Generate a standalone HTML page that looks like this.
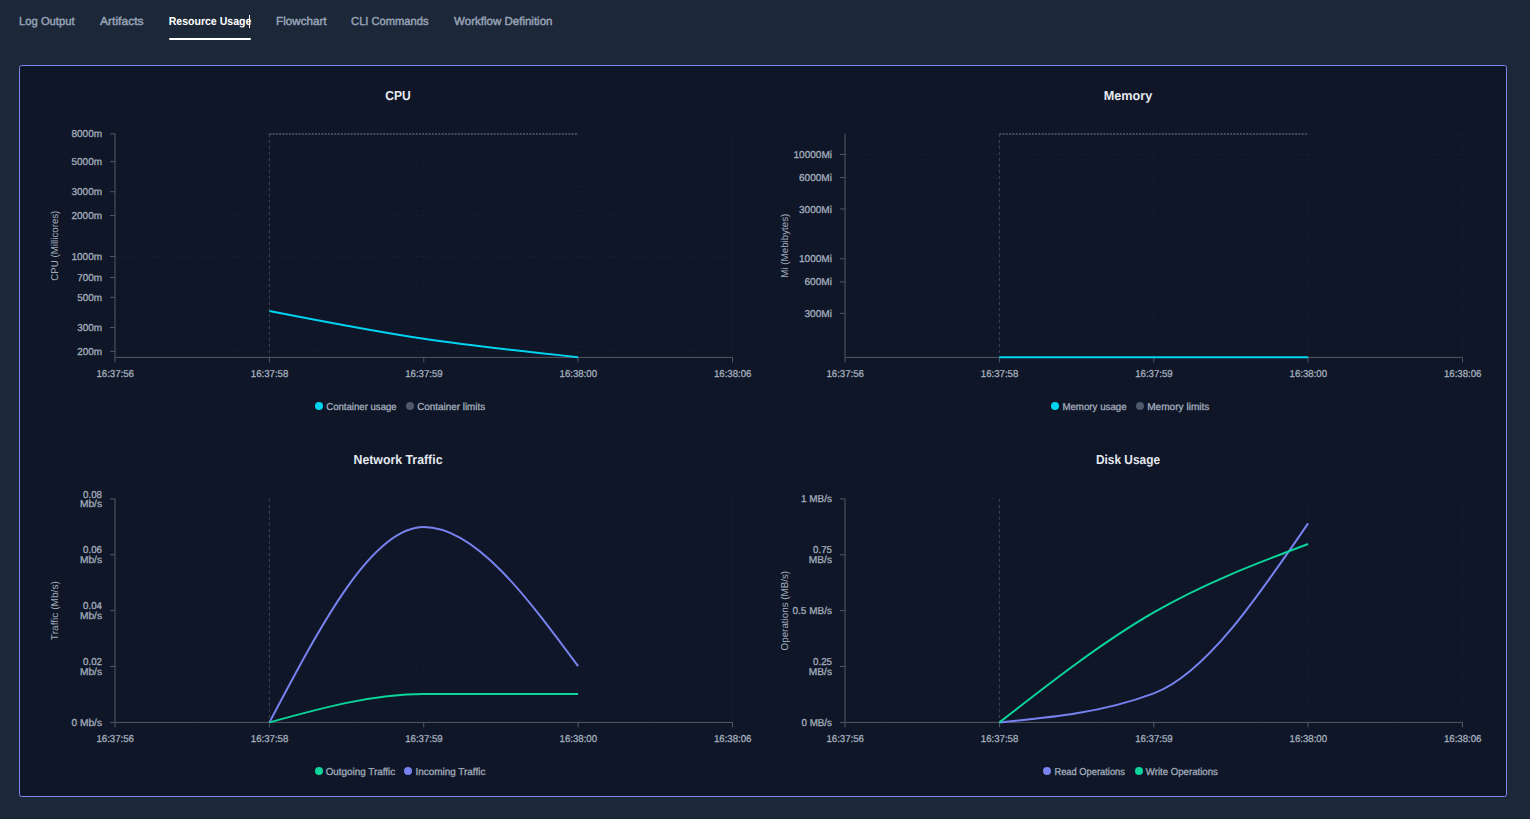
<!DOCTYPE html>
<html><head><meta charset="utf-8"><title>Resource Usage</title>
<style>
html,body{margin:0;padding:0;background:#1c2738;width:1530px;height:819px;overflow:hidden}
svg{display:block;font-family:"Liberation Sans", sans-serif}
</style></head><body>
<svg width="1530" height="819" viewBox="0 0 1530 819" text-rendering="geometricPrecision">
<rect width="1530" height="819" fill="#1c2738"/>
<text x="19.1" y="24.9" font-size="11.5" font-weight="400" fill="#97a3b6" text-anchor="start" textLength="55.4" lengthAdjust="spacingAndGlyphs" stroke="#97a3b6" stroke-width="0.45">Log Output</text>
<text x="100.1" y="24.9" font-size="11.5" font-weight="400" fill="#97a3b6" text-anchor="start" textLength="43.4" lengthAdjust="spacingAndGlyphs" stroke="#97a3b6" stroke-width="0.45">Artifacts</text>
<text x="168.7" y="24.9" font-size="11.5" font-weight="700" fill="#ffffff" text-anchor="start" textLength="82.6" lengthAdjust="spacingAndGlyphs">Resource Usage</text>
<text x="276.1" y="24.9" font-size="11.5" font-weight="400" fill="#97a3b6" text-anchor="start" textLength="50.4" lengthAdjust="spacingAndGlyphs" stroke="#97a3b6" stroke-width="0.45">Flowchart</text>
<text x="351.1" y="24.9" font-size="11.5" font-weight="400" fill="#97a3b6" text-anchor="start" textLength="77.4" lengthAdjust="spacingAndGlyphs" stroke="#97a3b6" stroke-width="0.45">CLI Commands</text>
<text x="454.1" y="24.9" font-size="11.5" font-weight="400" fill="#97a3b6" text-anchor="start" textLength="98.4" lengthAdjust="spacingAndGlyphs" stroke="#97a3b6" stroke-width="0.45">Workflow Definition</text>
<rect x="169" y="38" width="82" height="2" rx="1" fill="#fff"/>
<rect x="249" y="15" width="1" height="13" fill="#fff"/>
<rect x="19.5" y="65.5" width="1487" height="731" rx="2" fill="#0e1628" stroke="#7d87f0" stroke-width="1"/>
<text x="398" y="100" font-size="13" font-weight="700" fill="#e5e9f0" text-anchor="middle" textLength="25.5" lengthAdjust="spacingAndGlyphs">CPU</text>
<line x1="115" y1="133.9" x2="732.5" y2="133.9" stroke="#161f2f" stroke-dasharray="2.5 2.2"/>
<line x1="115" y1="161.61" x2="732.5" y2="161.61" stroke="#161f2f" stroke-dasharray="2.5 2.2"/>
<line x1="115" y1="191.72" x2="732.5" y2="191.72" stroke="#161f2f" stroke-dasharray="2.5 2.2"/>
<line x1="115" y1="215.62" x2="732.5" y2="215.62" stroke="#161f2f" stroke-dasharray="2.5 2.2"/>
<line x1="115" y1="256.48" x2="732.5" y2="256.48" stroke="#161f2f" stroke-dasharray="2.5 2.2"/>
<line x1="115" y1="286.59" x2="732.5" y2="286.59" stroke="#161f2f" stroke-dasharray="2.5 2.2"/>
<line x1="115" y1="310.49" x2="732.5" y2="310.49" stroke="#161f2f" stroke-dasharray="2.5 2.2"/>
<line x1="115" y1="351.35" x2="732.5" y2="351.35" stroke="#161f2f" stroke-dasharray="2.5 2.2"/>
<line x1="115" y1="133.9" x2="115" y2="357.4" stroke="#161f2f" stroke-dasharray="2.5 2.2"/>
<line x1="269.38" y1="133.9" x2="269.38" y2="357.4" stroke="#161f2f" stroke-dasharray="2.5 2.2"/>
<line x1="423.75" y1="133.9" x2="423.75" y2="357.4" stroke="#161f2f" stroke-dasharray="2.5 2.2"/>
<line x1="578.12" y1="133.9" x2="578.12" y2="357.4" stroke="#161f2f" stroke-dasharray="2.5 2.2"/>
<line x1="732.5" y1="133.9" x2="732.5" y2="357.4" stroke="#161f2f" stroke-dasharray="2.5 2.2"/>
<line x1="269.38" y1="133.9" x2="269.38" y2="357.4" stroke="#3b4658" stroke-dasharray="3 3"/>
<line x1="115" y1="133.9" x2="115" y2="357.4" stroke="#55585f"/>
<line x1="115" y1="357.4" x2="732.5" y2="357.4" stroke="#55585f"/>
<line x1="115" y1="357.4" x2="115" y2="362.4" stroke="#55585f"/>
<line x1="269.38" y1="357.4" x2="269.38" y2="362.4" stroke="#55585f"/>
<line x1="423.75" y1="357.4" x2="423.75" y2="362.4" stroke="#55585f"/>
<line x1="578.12" y1="357.4" x2="578.12" y2="362.4" stroke="#55585f"/>
<line x1="732.5" y1="357.4" x2="732.5" y2="362.4" stroke="#55585f"/>
<line x1="110" y1="133.9" x2="115" y2="133.9" stroke="#55585f"/>
<text x="102" y="137" font-size="10" font-weight="400" fill="#a3adbb" text-anchor="end" textLength="30.5" lengthAdjust="spacingAndGlyphs" stroke="#a3adbb" stroke-width="0.3">8000m</text>
<line x1="110" y1="161.61" x2="115" y2="161.61" stroke="#55585f"/>
<text x="102" y="165" font-size="10" font-weight="400" fill="#a3adbb" text-anchor="end" textLength="30.5" lengthAdjust="spacingAndGlyphs" stroke="#a3adbb" stroke-width="0.3">5000m</text>
<line x1="110" y1="191.72" x2="115" y2="191.72" stroke="#55585f"/>
<text x="102" y="195" font-size="10" font-weight="400" fill="#a3adbb" text-anchor="end" textLength="30.5" lengthAdjust="spacingAndGlyphs" stroke="#a3adbb" stroke-width="0.3">3000m</text>
<line x1="110" y1="215.62" x2="115" y2="215.62" stroke="#55585f"/>
<text x="102" y="219" font-size="10" font-weight="400" fill="#a3adbb" text-anchor="end" textLength="30.5" lengthAdjust="spacingAndGlyphs" stroke="#a3adbb" stroke-width="0.3">2000m</text>
<line x1="110" y1="256.48" x2="115" y2="256.48" stroke="#55585f"/>
<text x="102" y="260" font-size="10" font-weight="400" fill="#a3adbb" text-anchor="end" textLength="30.5" lengthAdjust="spacingAndGlyphs" stroke="#a3adbb" stroke-width="0.3">1000m</text>
<line x1="110" y1="277.5" x2="115" y2="277.5" stroke="#55585f"/>
<text x="102" y="281" font-size="10" font-weight="400" fill="#a3adbb" text-anchor="end" textLength="24.8" lengthAdjust="spacingAndGlyphs" stroke="#a3adbb" stroke-width="0.3">700m</text>
<line x1="110" y1="297.34" x2="115" y2="297.34" stroke="#55585f"/>
<text x="102" y="301" font-size="10" font-weight="400" fill="#a3adbb" text-anchor="end" textLength="24.8" lengthAdjust="spacingAndGlyphs" stroke="#a3adbb" stroke-width="0.3">500m</text>
<line x1="110" y1="327.45" x2="115" y2="327.45" stroke="#55585f"/>
<text x="102" y="331" font-size="10" font-weight="400" fill="#a3adbb" text-anchor="end" textLength="24.8" lengthAdjust="spacingAndGlyphs" stroke="#a3adbb" stroke-width="0.3">300m</text>
<line x1="110" y1="351.35" x2="115" y2="351.35" stroke="#55585f"/>
<text x="102" y="355" font-size="10" font-weight="400" fill="#a3adbb" text-anchor="end" textLength="24.8" lengthAdjust="spacingAndGlyphs" stroke="#a3adbb" stroke-width="0.3">200m</text>
<text x="115.2" y="377" font-size="10" font-weight="400" fill="#a3adbb" text-anchor="middle" textLength="37.6" lengthAdjust="spacingAndGlyphs" stroke="#a3adbb" stroke-width="0.3">16:37:56</text>
<text x="269.57" y="377" font-size="10" font-weight="400" fill="#a3adbb" text-anchor="middle" textLength="37.6" lengthAdjust="spacingAndGlyphs" stroke="#a3adbb" stroke-width="0.3">16:37:58</text>
<text x="423.95" y="377" font-size="10" font-weight="400" fill="#a3adbb" text-anchor="middle" textLength="37.6" lengthAdjust="spacingAndGlyphs" stroke="#a3adbb" stroke-width="0.3">16:37:59</text>
<text x="578.33" y="377" font-size="10" font-weight="400" fill="#a3adbb" text-anchor="middle" textLength="37.6" lengthAdjust="spacingAndGlyphs" stroke="#a3adbb" stroke-width="0.3">16:38:00</text>
<text x="732.7" y="377" font-size="10" font-weight="400" fill="#a3adbb" text-anchor="middle" textLength="37.6" lengthAdjust="spacingAndGlyphs" stroke="#a3adbb" stroke-width="0.3">16:38:06</text>
<text x="0" y="0" font-size="10" fill="#a3adbb" text-anchor="middle" textLength="70" lengthAdjust="spacingAndGlyphs" transform="translate(57.6,245.65) rotate(-90)">CPU (Millicores)</text>
<path d="M269.38,134C320.83,134,372.29,134,423.75,134C475.21,134,526.67,134,578.12,134" fill="none" stroke="#404c5f" stroke-width="2" stroke-dasharray="2 1.25"/>
<path d="M269.38,311C320.83,321.05,372.29,331.1,423.75,338.8C475.21,346.5,526.67,351.85,578.12,357.2" fill="none" stroke="#00d3ef" stroke-width="2"/>
<circle cx="319" cy="406" r="4" fill="#00d3ef"/>
<text x="326.2" y="410" font-size="10" font-weight="400" fill="#a3adbb" text-anchor="start" textLength="70.5" lengthAdjust="spacingAndGlyphs" stroke="#a3adbb" stroke-width="0.3">Container usage</text>
<circle cx="410" cy="406" r="4" fill="#4e5a6a"/>
<text x="417.2" y="410" font-size="10" font-weight="400" fill="#a3adbb" text-anchor="start" textLength="68" lengthAdjust="spacingAndGlyphs" stroke="#a3adbb" stroke-width="0.3">Container limits</text>
<text x="1128" y="100" font-size="13" font-weight="700" fill="#e5e9f0" text-anchor="middle" textLength="48.5" lengthAdjust="spacingAndGlyphs">Memory</text>
<line x1="845" y1="134" x2="1462.5" y2="134" stroke="#161f2f" stroke-dasharray="2.5 2.2"/>
<line x1="845" y1="154.42" x2="1462.5" y2="154.42" stroke="#161f2f" stroke-dasharray="2.5 2.2"/>
<line x1="845" y1="177.57" x2="1462.5" y2="177.57" stroke="#161f2f" stroke-dasharray="2.5 2.2"/>
<line x1="845" y1="208.98" x2="1462.5" y2="208.98" stroke="#161f2f" stroke-dasharray="2.5 2.2"/>
<line x1="845" y1="258.77" x2="1462.5" y2="258.77" stroke="#161f2f" stroke-dasharray="2.5 2.2"/>
<line x1="845" y1="281.92" x2="1462.5" y2="281.92" stroke="#161f2f" stroke-dasharray="2.5 2.2"/>
<line x1="845" y1="313.33" x2="1462.5" y2="313.33" stroke="#161f2f" stroke-dasharray="2.5 2.2"/>
<line x1="845" y1="133.9" x2="845" y2="357.4" stroke="#161f2f" stroke-dasharray="2.5 2.2"/>
<line x1="999.38" y1="133.9" x2="999.38" y2="357.4" stroke="#161f2f" stroke-dasharray="2.5 2.2"/>
<line x1="1153.75" y1="133.9" x2="1153.75" y2="357.4" stroke="#161f2f" stroke-dasharray="2.5 2.2"/>
<line x1="1308.12" y1="133.9" x2="1308.12" y2="357.4" stroke="#161f2f" stroke-dasharray="2.5 2.2"/>
<line x1="1462.5" y1="133.9" x2="1462.5" y2="357.4" stroke="#161f2f" stroke-dasharray="2.5 2.2"/>
<line x1="999.38" y1="133.9" x2="999.38" y2="357.4" stroke="#3b4658" stroke-dasharray="3 3"/>
<line x1="845" y1="133.9" x2="845" y2="357.4" stroke="#55585f"/>
<line x1="845" y1="357.4" x2="1462.5" y2="357.4" stroke="#55585f"/>
<line x1="845" y1="357.4" x2="845" y2="362.4" stroke="#55585f"/>
<line x1="999.38" y1="357.4" x2="999.38" y2="362.4" stroke="#55585f"/>
<line x1="1153.75" y1="357.4" x2="1153.75" y2="362.4" stroke="#55585f"/>
<line x1="1308.12" y1="357.4" x2="1308.12" y2="362.4" stroke="#55585f"/>
<line x1="1462.5" y1="357.4" x2="1462.5" y2="362.4" stroke="#55585f"/>
<line x1="840" y1="154.42" x2="845" y2="154.42" stroke="#55585f"/>
<text x="832" y="158" font-size="10" font-weight="400" fill="#a3adbb" text-anchor="end" textLength="38.5" lengthAdjust="spacingAndGlyphs" stroke="#a3adbb" stroke-width="0.3">10000Mi</text>
<line x1="840" y1="177.57" x2="845" y2="177.57" stroke="#55585f"/>
<text x="832" y="181" font-size="10" font-weight="400" fill="#a3adbb" text-anchor="end" textLength="33" lengthAdjust="spacingAndGlyphs" stroke="#a3adbb" stroke-width="0.3">6000Mi</text>
<line x1="840" y1="208.98" x2="845" y2="208.98" stroke="#55585f"/>
<text x="832" y="213" font-size="10" font-weight="400" fill="#a3adbb" text-anchor="end" textLength="33" lengthAdjust="spacingAndGlyphs" stroke="#a3adbb" stroke-width="0.3">3000Mi</text>
<line x1="840" y1="258.77" x2="845" y2="258.77" stroke="#55585f"/>
<text x="832" y="262" font-size="10" font-weight="400" fill="#a3adbb" text-anchor="end" textLength="33" lengthAdjust="spacingAndGlyphs" stroke="#a3adbb" stroke-width="0.3">1000Mi</text>
<line x1="840" y1="281.92" x2="845" y2="281.92" stroke="#55585f"/>
<text x="832" y="285" font-size="10" font-weight="400" fill="#a3adbb" text-anchor="end" textLength="27.5" lengthAdjust="spacingAndGlyphs" stroke="#a3adbb" stroke-width="0.3">600Mi</text>
<line x1="840" y1="313.33" x2="845" y2="313.33" stroke="#55585f"/>
<text x="832" y="317" font-size="10" font-weight="400" fill="#a3adbb" text-anchor="end" textLength="27.5" lengthAdjust="spacingAndGlyphs" stroke="#a3adbb" stroke-width="0.3">300Mi</text>
<text x="845.2" y="377" font-size="10" font-weight="400" fill="#a3adbb" text-anchor="middle" textLength="37.6" lengthAdjust="spacingAndGlyphs" stroke="#a3adbb" stroke-width="0.3">16:37:56</text>
<text x="999.58" y="377" font-size="10" font-weight="400" fill="#a3adbb" text-anchor="middle" textLength="37.6" lengthAdjust="spacingAndGlyphs" stroke="#a3adbb" stroke-width="0.3">16:37:58</text>
<text x="1153.95" y="377" font-size="10" font-weight="400" fill="#a3adbb" text-anchor="middle" textLength="37.6" lengthAdjust="spacingAndGlyphs" stroke="#a3adbb" stroke-width="0.3">16:37:59</text>
<text x="1308.33" y="377" font-size="10" font-weight="400" fill="#a3adbb" text-anchor="middle" textLength="37.6" lengthAdjust="spacingAndGlyphs" stroke="#a3adbb" stroke-width="0.3">16:38:00</text>
<text x="1462.7" y="377" font-size="10" font-weight="400" fill="#a3adbb" text-anchor="middle" textLength="37.6" lengthAdjust="spacingAndGlyphs" stroke="#a3adbb" stroke-width="0.3">16:38:06</text>
<text x="0" y="0" font-size="10" fill="#a3adbb" text-anchor="middle" textLength="64" lengthAdjust="spacingAndGlyphs" transform="translate(787.6,245.65) rotate(-90)">Mi (Mebibytes)</text>
<path d="M999.38,134C1050.83,134,1102.29,134,1153.75,134C1205.21,134,1256.67,134,1308.12,134" fill="none" stroke="#404c5f" stroke-width="2" stroke-dasharray="2 1.25"/>
<path d="M999.38,357.2C1050.83,357.2,1102.29,357.2,1153.75,357.2C1205.21,357.2,1256.67,357.2,1308.12,357.2" fill="none" stroke="#00d3ef" stroke-width="2"/>
<circle cx="1055" cy="406" r="4" fill="#00d3ef"/>
<text x="1062.4" y="410" font-size="10" font-weight="400" fill="#a3adbb" text-anchor="start" textLength="64.2" lengthAdjust="spacingAndGlyphs" stroke="#a3adbb" stroke-width="0.3">Memory usage</text>
<circle cx="1140" cy="406" r="4" fill="#4e5a6a"/>
<text x="1147.2" y="410" font-size="10" font-weight="400" fill="#a3adbb" text-anchor="start" textLength="62.2" lengthAdjust="spacingAndGlyphs" stroke="#a3adbb" stroke-width="0.3">Memory limits</text>
<text x="398" y="464" font-size="13" font-weight="700" fill="#e5e9f0" text-anchor="middle" textLength="89" lengthAdjust="spacingAndGlyphs">Network Traffic</text>
<line x1="115" y1="498.9" x2="732.5" y2="498.9" stroke="#161f2f" stroke-dasharray="2.5 2.2"/>
<line x1="115" y1="554.77" x2="732.5" y2="554.77" stroke="#161f2f" stroke-dasharray="2.5 2.2"/>
<line x1="115" y1="610.65" x2="732.5" y2="610.65" stroke="#161f2f" stroke-dasharray="2.5 2.2"/>
<line x1="115" y1="666.52" x2="732.5" y2="666.52" stroke="#161f2f" stroke-dasharray="2.5 2.2"/>
<line x1="115" y1="722.4" x2="732.5" y2="722.4" stroke="#161f2f" stroke-dasharray="2.5 2.2"/>
<line x1="115" y1="498.9" x2="115" y2="722.4" stroke="#161f2f" stroke-dasharray="2.5 2.2"/>
<line x1="269.38" y1="498.9" x2="269.38" y2="722.4" stroke="#161f2f" stroke-dasharray="2.5 2.2"/>
<line x1="423.75" y1="498.9" x2="423.75" y2="722.4" stroke="#161f2f" stroke-dasharray="2.5 2.2"/>
<line x1="578.12" y1="498.9" x2="578.12" y2="722.4" stroke="#161f2f" stroke-dasharray="2.5 2.2"/>
<line x1="732.5" y1="498.9" x2="732.5" y2="722.4" stroke="#161f2f" stroke-dasharray="2.5 2.2"/>
<line x1="269.38" y1="498.9" x2="269.38" y2="722.4" stroke="#3b4658" stroke-dasharray="3 3"/>
<line x1="115" y1="498.9" x2="115" y2="722.4" stroke="#55585f"/>
<line x1="115" y1="722.4" x2="732.5" y2="722.4" stroke="#55585f"/>
<line x1="115" y1="722.4" x2="115" y2="727.4" stroke="#55585f"/>
<line x1="269.38" y1="722.4" x2="269.38" y2="727.4" stroke="#55585f"/>
<line x1="423.75" y1="722.4" x2="423.75" y2="727.4" stroke="#55585f"/>
<line x1="578.12" y1="722.4" x2="578.12" y2="727.4" stroke="#55585f"/>
<line x1="732.5" y1="722.4" x2="732.5" y2="727.4" stroke="#55585f"/>
<line x1="110" y1="498.9" x2="115" y2="498.9" stroke="#55585f"/>
<text x="102" y="498" font-size="10" font-weight="400" fill="#a3adbb" text-anchor="end" textLength="18.9" lengthAdjust="spacingAndGlyphs" stroke="#a3adbb" stroke-width="0.3">0.08</text>
<text x="102" y="507" font-size="10" font-weight="400" fill="#a3adbb" text-anchor="end" textLength="22" lengthAdjust="spacingAndGlyphs" stroke="#a3adbb" stroke-width="0.3">Mb/s</text>
<line x1="110" y1="554.77" x2="115" y2="554.77" stroke="#55585f"/>
<text x="102" y="553" font-size="10" font-weight="400" fill="#a3adbb" text-anchor="end" textLength="18.9" lengthAdjust="spacingAndGlyphs" stroke="#a3adbb" stroke-width="0.3">0.06</text>
<text x="102" y="563" font-size="10" font-weight="400" fill="#a3adbb" text-anchor="end" textLength="22" lengthAdjust="spacingAndGlyphs" stroke="#a3adbb" stroke-width="0.3">Mb/s</text>
<line x1="110" y1="610.65" x2="115" y2="610.65" stroke="#55585f"/>
<text x="102" y="609" font-size="10" font-weight="400" fill="#a3adbb" text-anchor="end" textLength="18.9" lengthAdjust="spacingAndGlyphs" stroke="#a3adbb" stroke-width="0.3">0.04</text>
<text x="102" y="619" font-size="10" font-weight="400" fill="#a3adbb" text-anchor="end" textLength="22" lengthAdjust="spacingAndGlyphs" stroke="#a3adbb" stroke-width="0.3">Mb/s</text>
<line x1="110" y1="666.52" x2="115" y2="666.52" stroke="#55585f"/>
<text x="102" y="665" font-size="10" font-weight="400" fill="#a3adbb" text-anchor="end" textLength="18.9" lengthAdjust="spacingAndGlyphs" stroke="#a3adbb" stroke-width="0.3">0.02</text>
<text x="102" y="675" font-size="10" font-weight="400" fill="#a3adbb" text-anchor="end" textLength="22" lengthAdjust="spacingAndGlyphs" stroke="#a3adbb" stroke-width="0.3">Mb/s</text>
<line x1="110" y1="722.4" x2="115" y2="722.4" stroke="#55585f"/>
<text x="102" y="726" font-size="10" font-weight="400" fill="#a3adbb" text-anchor="end" textLength="30.5" lengthAdjust="spacingAndGlyphs" stroke="#a3adbb" stroke-width="0.3">0 Mb/s</text>
<text x="115.2" y="742" font-size="10" font-weight="400" fill="#a3adbb" text-anchor="middle" textLength="37.6" lengthAdjust="spacingAndGlyphs" stroke="#a3adbb" stroke-width="0.3">16:37:56</text>
<text x="269.57" y="742" font-size="10" font-weight="400" fill="#a3adbb" text-anchor="middle" textLength="37.6" lengthAdjust="spacingAndGlyphs" stroke="#a3adbb" stroke-width="0.3">16:37:58</text>
<text x="423.95" y="742" font-size="10" font-weight="400" fill="#a3adbb" text-anchor="middle" textLength="37.6" lengthAdjust="spacingAndGlyphs" stroke="#a3adbb" stroke-width="0.3">16:37:59</text>
<text x="578.33" y="742" font-size="10" font-weight="400" fill="#a3adbb" text-anchor="middle" textLength="37.6" lengthAdjust="spacingAndGlyphs" stroke="#a3adbb" stroke-width="0.3">16:38:00</text>
<text x="732.7" y="742" font-size="10" font-weight="400" fill="#a3adbb" text-anchor="middle" textLength="37.6" lengthAdjust="spacingAndGlyphs" stroke="#a3adbb" stroke-width="0.3">16:38:06</text>
<text x="0" y="0" font-size="10" fill="#a3adbb" text-anchor="middle" textLength="59" lengthAdjust="spacingAndGlyphs" transform="translate(57.6,610.65) rotate(-90)">Traffic (Mb/s)</text>
<path d="M269.38,722.4C320.83,624.7,372.29,527,423.75,527C475.21,527,526.67,596.6,578.12,666.2" fill="none" stroke="#7882ee" stroke-width="2"/>
<path d="M269.38,722.4C320.83,708.2,372.29,694,423.75,694C475.21,694,526.67,694,578.12,694" fill="none" stroke="#0cd49a" stroke-width="2"/>
<circle cx="319" cy="771" r="4" fill="#0cd49a"/>
<text x="325.7" y="775" font-size="10" font-weight="400" fill="#a3adbb" text-anchor="start" textLength="69.5" lengthAdjust="spacingAndGlyphs" stroke="#a3adbb" stroke-width="0.3">Outgoing Traffic</text>
<circle cx="408" cy="771" r="4" fill="#7882ee"/>
<text x="415.4" y="775" font-size="10" font-weight="400" fill="#a3adbb" text-anchor="start" textLength="70" lengthAdjust="spacingAndGlyphs" stroke="#a3adbb" stroke-width="0.3">Incoming Traffic</text>
<text x="1128" y="464" font-size="13" font-weight="700" fill="#e5e9f0" text-anchor="middle" textLength="64" lengthAdjust="spacingAndGlyphs">Disk Usage</text>
<line x1="845" y1="498.9" x2="1462.5" y2="498.9" stroke="#161f2f" stroke-dasharray="2.5 2.2"/>
<line x1="845" y1="554.77" x2="1462.5" y2="554.77" stroke="#161f2f" stroke-dasharray="2.5 2.2"/>
<line x1="845" y1="610.65" x2="1462.5" y2="610.65" stroke="#161f2f" stroke-dasharray="2.5 2.2"/>
<line x1="845" y1="666.52" x2="1462.5" y2="666.52" stroke="#161f2f" stroke-dasharray="2.5 2.2"/>
<line x1="845" y1="722.4" x2="1462.5" y2="722.4" stroke="#161f2f" stroke-dasharray="2.5 2.2"/>
<line x1="845" y1="498.9" x2="845" y2="722.4" stroke="#161f2f" stroke-dasharray="2.5 2.2"/>
<line x1="999.38" y1="498.9" x2="999.38" y2="722.4" stroke="#161f2f" stroke-dasharray="2.5 2.2"/>
<line x1="1153.75" y1="498.9" x2="1153.75" y2="722.4" stroke="#161f2f" stroke-dasharray="2.5 2.2"/>
<line x1="1308.12" y1="498.9" x2="1308.12" y2="722.4" stroke="#161f2f" stroke-dasharray="2.5 2.2"/>
<line x1="1462.5" y1="498.9" x2="1462.5" y2="722.4" stroke="#161f2f" stroke-dasharray="2.5 2.2"/>
<line x1="999.38" y1="498.9" x2="999.38" y2="722.4" stroke="#3b4658" stroke-dasharray="3 3"/>
<line x1="845" y1="498.9" x2="845" y2="722.4" stroke="#55585f"/>
<line x1="845" y1="722.4" x2="1462.5" y2="722.4" stroke="#55585f"/>
<line x1="845" y1="722.4" x2="845" y2="727.4" stroke="#55585f"/>
<line x1="999.38" y1="722.4" x2="999.38" y2="727.4" stroke="#55585f"/>
<line x1="1153.75" y1="722.4" x2="1153.75" y2="727.4" stroke="#55585f"/>
<line x1="1308.12" y1="722.4" x2="1308.12" y2="727.4" stroke="#55585f"/>
<line x1="1462.5" y1="722.4" x2="1462.5" y2="727.4" stroke="#55585f"/>
<line x1="840" y1="498.9" x2="845" y2="498.9" stroke="#55585f"/>
<text x="832" y="502" font-size="10" font-weight="400" fill="#a3adbb" text-anchor="end" textLength="31" lengthAdjust="spacingAndGlyphs" stroke="#a3adbb" stroke-width="0.3">1 MB/s</text>
<line x1="840" y1="554.77" x2="845" y2="554.77" stroke="#55585f"/>
<text x="832" y="553" font-size="10" font-weight="400" fill="#a3adbb" text-anchor="end" textLength="18.9" lengthAdjust="spacingAndGlyphs" stroke="#a3adbb" stroke-width="0.3">0.75</text>
<text x="832" y="563" font-size="10" font-weight="400" fill="#a3adbb" text-anchor="end" textLength="23.2" lengthAdjust="spacingAndGlyphs" stroke="#a3adbb" stroke-width="0.3">MB/s</text>
<line x1="840" y1="610.65" x2="845" y2="610.65" stroke="#55585f"/>
<text x="832" y="614" font-size="10" font-weight="400" fill="#a3adbb" text-anchor="end" textLength="39.5" lengthAdjust="spacingAndGlyphs" stroke="#a3adbb" stroke-width="0.3">0.5 MB/s</text>
<line x1="840" y1="666.52" x2="845" y2="666.52" stroke="#55585f"/>
<text x="832" y="665" font-size="10" font-weight="400" fill="#a3adbb" text-anchor="end" textLength="18.9" lengthAdjust="spacingAndGlyphs" stroke="#a3adbb" stroke-width="0.3">0.25</text>
<text x="832" y="675" font-size="10" font-weight="400" fill="#a3adbb" text-anchor="end" textLength="23.2" lengthAdjust="spacingAndGlyphs" stroke="#a3adbb" stroke-width="0.3">MB/s</text>
<line x1="840" y1="722.4" x2="845" y2="722.4" stroke="#55585f"/>
<text x="832" y="726" font-size="10" font-weight="400" fill="#a3adbb" text-anchor="end" textLength="30.5" lengthAdjust="spacingAndGlyphs" stroke="#a3adbb" stroke-width="0.3">0 MB/s</text>
<text x="845.2" y="742" font-size="10" font-weight="400" fill="#a3adbb" text-anchor="middle" textLength="37.6" lengthAdjust="spacingAndGlyphs" stroke="#a3adbb" stroke-width="0.3">16:37:56</text>
<text x="999.58" y="742" font-size="10" font-weight="400" fill="#a3adbb" text-anchor="middle" textLength="37.6" lengthAdjust="spacingAndGlyphs" stroke="#a3adbb" stroke-width="0.3">16:37:58</text>
<text x="1153.95" y="742" font-size="10" font-weight="400" fill="#a3adbb" text-anchor="middle" textLength="37.6" lengthAdjust="spacingAndGlyphs" stroke="#a3adbb" stroke-width="0.3">16:37:59</text>
<text x="1308.33" y="742" font-size="10" font-weight="400" fill="#a3adbb" text-anchor="middle" textLength="37.6" lengthAdjust="spacingAndGlyphs" stroke="#a3adbb" stroke-width="0.3">16:38:00</text>
<text x="1462.7" y="742" font-size="10" font-weight="400" fill="#a3adbb" text-anchor="middle" textLength="37.6" lengthAdjust="spacingAndGlyphs" stroke="#a3adbb" stroke-width="0.3">16:38:06</text>
<text x="0" y="0" font-size="10" fill="#a3adbb" text-anchor="middle" textLength="79.5" lengthAdjust="spacingAndGlyphs" transform="translate(787.6,610.65) rotate(-90)">Operations (MB/s)</text>
<path d="M999.38,722.4C1050.83,717.57,1102.29,712.73,1153.75,693.4C1205.21,674.07,1256.67,598.73,1308.12,523.4" fill="none" stroke="#7882ee" stroke-width="2"/>
<path d="M999.38,722.4C1050.83,682.27,1102.29,642.13,1153.75,612.4C1205.21,582.67,1256.67,563.33,1308.12,544" fill="none" stroke="#0cd49a" stroke-width="2"/>
<circle cx="1047" cy="771" r="4" fill="#7882ee"/>
<text x="1054.4" y="775" font-size="10" font-weight="400" fill="#a3adbb" text-anchor="start" textLength="70.6" lengthAdjust="spacingAndGlyphs" stroke="#a3adbb" stroke-width="0.3">Read Operations</text>
<circle cx="1139" cy="771" r="4" fill="#0cd49a"/>
<text x="1145.8" y="775" font-size="10" font-weight="400" fill="#a3adbb" text-anchor="start" textLength="72" lengthAdjust="spacingAndGlyphs" stroke="#a3adbb" stroke-width="0.3">Write Operations</text>
</svg>
</body></html>
